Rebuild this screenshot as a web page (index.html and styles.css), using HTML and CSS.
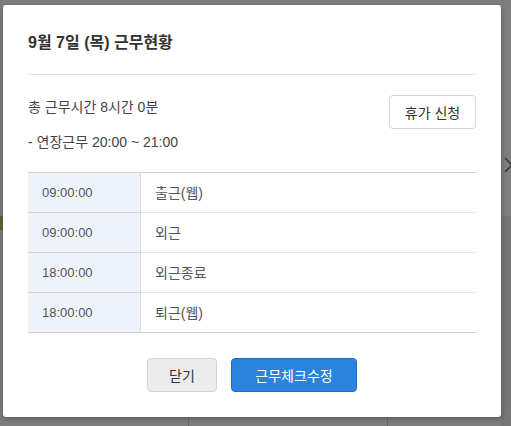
FILE: index.html
```html
<!DOCTYPE html>
<html lang="ko">
<head>
    <meta charset="UTF-8">
    <meta name="viewport" content="width=device-width, initial-scale=1.0">
    <title>근무현황</title>
    <link rel="stylesheet" href="styles.css">
</head>
<body>
    <div class="backdrop">
        <span class="bg-line bg-line-1"></span>
        <span class="bg-line bg-line-2"></span>
        <span class="bg-mark"></span>
        <span class="bg-strip"></span>
        <svg class="bg-arrow" width="10" height="18" viewBox="0 0 10 18">
            <path d="M2 2 L9 9 L2 16" fill="none" stroke="#3a3a3a" stroke-width="1.6"/>
        </svg>
    </div>

    <div class="modal">
        <div class="modal-head">
            <h1>9월 7일 (목) 근무현황</h1>
        </div>

        <div class="summary">
            <div class="summary-text">
                <p>총 근무시간 8시간 0분</p>
                <p>- 연장근무 20:00 ~ 21:00</p>
            </div>
            <button class="btn-outline">휴가 신청</button>
        </div>

        <table class="check-list">
            <tr><td class="time">09:00:00</td><td>출근(웹)</td></tr>
            <tr><td class="time">09:00:00</td><td>외근</td></tr>
            <tr><td class="time">18:00:00</td><td>외근종료</td></tr>
            <tr><td class="time">18:00:00</td><td>퇴근(웹)</td></tr>
        </table>

        <div class="modal-foot">
            <button class="btn-gray">닫기</button>
            <button class="btn-blue">근무체크수정</button>
        </div>
    </div>
</body>
</html>
```

FILE: styles.css
```css
body {
    margin: 0;
    height: 426px;
    overflow: hidden;
    background-color: #7f7f7f;
    font-family: 'Liberation Sans', 'Noto Sans CJK KR', sans-serif;
    font-size: 14px;
    color: #444;
    position: relative;
}
.backdrop .bg-line {
    position: absolute;
    bottom: 0;
    width: 1px;
    height: 12px;
    background-color: #6a6a6a;
}
.bg-line-1 { left: 188px; }
.bg-line-2 { left: 387px; }
.bg-mark {
    position: absolute;
    left: 0;
    top: 216px;
    width: 3px;
    height: 14px;
    background-color: #5a6a3a;
}
.bg-strip {
    position: absolute;
    right: 0;
    top: 216px;
    width: 10px;
    height: 210px;
    background-color: #767676;
}
.bg-arrow {
    position: absolute;
    right: -2px;
    top: 156px;
}
.modal {
    position: relative;
    margin: 5px 0 0 3px;
    width: 498px;
    height: 412px;
    box-sizing: border-box;
    padding: 0 25px;
    background-color: #fff;
    border-radius: 3px;
    box-shadow: 0 2px 6px rgba(0, 0, 0, 0.3);
}
.modal-head {
    padding: 28px 0 21px;
    border-bottom: 1px solid #e1e1e1;
}
h1 {
    margin: 0;
    font-size: 16px;
    line-height: 20px;
    font-weight: bold;
    color: #333;
}
.summary {
    display: flex;
    justify-content: space-between;
    align-items: flex-start;
}
.summary-text {
    padding-top: 22px;
}
.summary-text p {
    margin: 0 0 15px;
    line-height: 20px;
}
.summary-text p:last-child {
    margin-bottom: 20px;
}
.btn-outline {
    margin-top: 20px;
    width: 87px;
    height: 34px;
    border: 1px solid #d6d6d6;
    border-radius: 4px;
    background-color: #fff;
    color: #333;
    font-family: inherit;
    font-size: 14px;
    padding: 0;
}
.check-list {
    width: 100%;
    border-collapse: collapse;
    border-top: 1px solid #d0d0d0;
    border-bottom: 1px solid #d0d0d0;
}
.check-list td {
    height: 39px;
    padding: 0 0 0 14px;
    border-bottom: 1px solid #e8e8e8;
    color: #555;
    line-height: 20px;
}
.check-list tr:last-child td {
    border-bottom: 1px solid #d0d0d0;
}
.check-list td.time {
    width: 98px;
    font-size: 13px;
    background-color: #eef3fb;
    border-right: 1px solid #dcdcdc;
    border-bottom-color: #d6d6d6;
}
.modal-foot {
    display: flex;
    justify-content: center;
    gap: 14px;
    margin-top: 25px;
}
.modal-foot button {
    height: 34px;
    border-radius: 4px;
    font-family: inherit;
    font-size: 14px;
    padding: 0;
}
.btn-gray {
    width: 70px;
    background-color: #ebebeb;
    border: 1px solid #d3d3d3;
    color: #333;
}
.btn-blue {
    width: 126px;
    background-color: #2a84de;
    border: 1px solid #1b6fc6;
    color: #fff;
}
```
